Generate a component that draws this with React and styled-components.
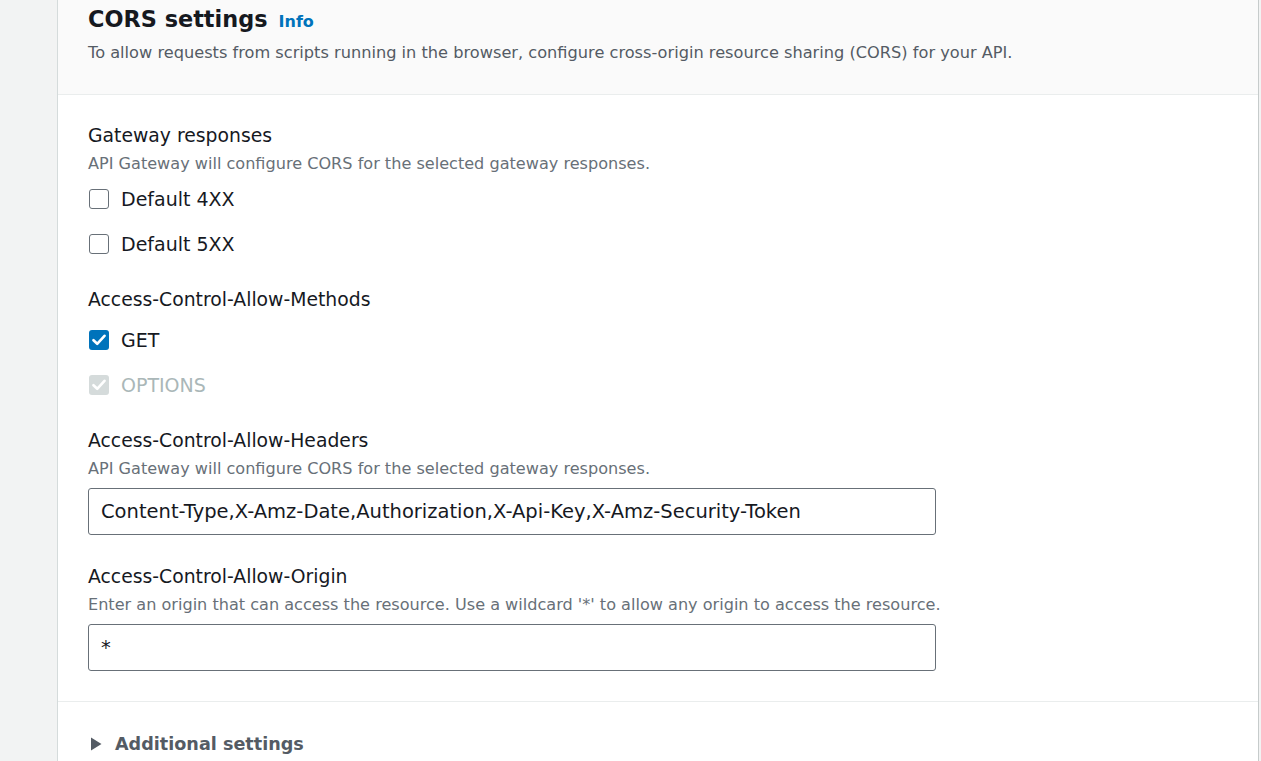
import React, { useState } from 'react'
import styled, { createGlobalStyle } from 'styled-components'

const GlobalStyle = createGlobalStyle`
  body {
    margin: 0;
    background: #f2f3f3;
    font-family: "DejaVu Sans", "Noto Sans", Arial, sans-serif;
    color: #16191f;
  }
`

const Page = styled.div`
  padding: 0 2px 0 57px;
  min-height: 761px;
`

const Card = styled.section`
  background: #ffffff;
  border-left: 1px solid #d5dbdb;
  border-right: 1px solid #c6cbcb;
  min-height: 761px;
`

const Header = styled.header`
  background: #fafafa;
  border-bottom: 1px solid #eaeded;
  padding: 4px 30px 30px;
`

const TitleRow = styled.div`
  display: flex;
  align-items: baseline;
  gap: 11px;
`

const Title = styled.h2`
  margin: 0;
  font-size: 22.4px;
  line-height: 30px;
  font-weight: 700;
  color: #16191f;
`

const InfoLink = styled.a`
  font-size: 16px;
  font-weight: 700;
  color: #0073bb;
  text-decoration: none;
`

const HeaderText = styled.p`
  margin: 8px 0 0;
  font-size: 16.2px;
  line-height: 22px;
  color: #545b64;
`

const Body = styled.div`
  padding: 29px 30px 30px;
  border-bottom: 1px solid #eaeded;
  display: flex;
  flex-direction: column;
  gap: 30px;
`

const Field = styled.div`
  display: flex;
  flex-direction: column;
`

const Label = styled.div`
  font-size: 18.8px;
  line-height: 24px;
  color: #16191f;
`

const Hint = styled.div`
  margin-top: 5px;
  font-size: 16.1px;
  line-height: 22px;
  color: #687078;
`

const Options = styled.div`
  display: flex;
  flex-direction: column;
  gap: 17px;
  margin-top: ${p => p.$tight ? '14px' : '10px'};
`

const CheckRow = styled.label`
  display: flex;
  align-items: center;
  gap: 12px;
  height: 28px;
  font-size: 19px;
  color: ${p => p.$disabled ? '#aab7b8' : '#16191f'};
  cursor: ${p => p.$disabled ? 'default' : 'pointer'};
`

const Box = styled.span`
  width: 20px;
  height: 20px;
  box-sizing: border-box;
  margin-left: 1px;
  border-radius: 3px;
  display: flex;
  align-items: center;
  justify-content: center;
  border: ${p => p.$checked ? 'none' : '1.5px solid #687078'};
  background: ${p => p.$disabled ? '#d5dbdb' : p.$checked ? '#0073bb' : '#ffffff'};
`

const TextInput = styled.input`
  margin-top: 8px;
  width: 848px;
  height: 47px;
  box-sizing: border-box;
  border: 1px solid #687078;
  border-radius: 3px;
  padding: 0 12px;
  font-family: inherit;
  font-size: 19.5px;
  color: #16191f;
  outline: none;
`

const Expander = styled.button`
  display: flex;
  align-items: center;
  gap: 13px;
  background: none;
  border: none;
  padding: 30px 32px;
  font-family: inherit;
  font-size: 17.6px;
  line-height: 24px;
  font-weight: 700;
  color: #545b64;
  cursor: pointer;
`

function Checkbox({ label, checked, disabled, onChange }) {
  return (
    <CheckRow $disabled={disabled} onClick={() => !disabled && onChange && onChange(!checked)}>
      <Box $checked={checked} $disabled={disabled}>
        {checked && (
          <svg width="14" height="12" viewBox="0 0 14 12">
            <path d="M1.5 6.2 L5.2 9.8 L12.5 1.8" fill="none" stroke="#fff" strokeWidth="2.6" strokeLinecap="round" strokeLinejoin="round" />
          </svg>
        )}
      </Box>
      {label}
    </CheckRow>
  )
}

export default function App() {
  const [gw, setGw] = useState({ d4: false, d5: false })
  const [getOn, setGetOn] = useState(true)
  const [headers, setHeaders] = useState('Content-Type,X-Amz-Date,Authorization,X-Api-Key,X-Amz-Security-Token')
  const [origin, setOrigin] = useState('*')

  return (
    <Page>
      <GlobalStyle />
      <Card>
        <Header>
          <TitleRow>
            <Title>CORS settings</Title>
            <InfoLink href="#">Info</InfoLink>
          </TitleRow>
          <HeaderText>
            To allow requests from scripts running in the browser, configure cross-origin resource sharing (CORS) for your API.
          </HeaderText>
        </Header>
        <Body>
          <Field>
            <Label>Gateway responses</Label>
            <Hint>API Gateway will configure CORS for the selected gateway responses.</Hint>
            <Options>
              <Checkbox label="Default 4XX" checked={gw.d4} onChange={v => setGw({ ...gw, d4: v })} />
              <Checkbox label="Default 5XX" checked={gw.d5} onChange={v => setGw({ ...gw, d5: v })} />
            </Options>
          </Field>
          <Field>
            <Label>Access-Control-Allow-Methods</Label>
            <Options $tight>
              <Checkbox label="GET" checked={getOn} onChange={setGetOn} />
              <Checkbox label="OPTIONS" checked disabled />
            </Options>
          </Field>
          <Field>
            <Label>Access-Control-Allow-Headers</Label>
            <Hint>API Gateway will configure CORS for the selected gateway responses.</Hint>
            <TextInput value={headers} onChange={e => setHeaders(e.target.value)} />
          </Field>
          <Field>
            <Label>Access-Control-Allow-Origin</Label>
            <Hint>Enter an origin that can access the resource. Use a wildcard '*' to allow any origin to access the resource.</Hint>
            <TextInput value={origin} onChange={e => setOrigin(e.target.value)} />
          </Field>
        </Body>
        <Expander>
          <svg width="12" height="14" viewBox="0 0 12 14">
            <path d="M1 0.5 L11.5 7 L1 13.5 Z" fill="#545b64" />
          </svg>
          Additional settings
        </Expander>
      </Card>
    </Page>
  )
}
